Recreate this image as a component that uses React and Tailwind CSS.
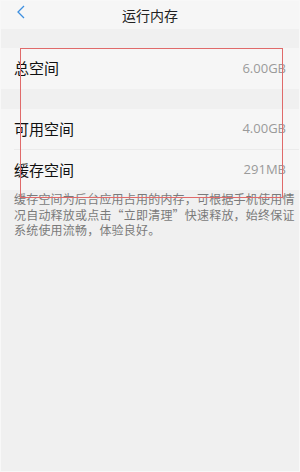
import React from "react";

export default function App() {
  const font = { fontFamily: '"Noto Sans CJK SC", "Noto Sans", sans-serif' };
  const num = { fontFamily: '"Open Sans", sans-serif' };
  return (
    <div className="relative w-[300px] h-[472px] bg-[#f0f0f0] border border-[#f8f8f8] overflow-hidden" style={font}>
      <div className="relative h-[28px] bg-[#f6f6f6] flex items-center justify-center">
        <svg className="absolute left-[14px] top-[4px]" width="12" height="14" viewBox="0 0 12 14">
          <path d="M9 1 L3 7 L9 13" fill="none" stroke="#3d8fe0" strokeWidth="1.3" />
        </svg>
        <span className="text-[14px] text-[#222] leading-none">运行内存</span>
      </div>
      <div className="h-[19px]" />
      <div className="h-[41px] bg-[#f6f6f6] flex items-center justify-between pl-[13px] pr-[13px]">
        <span className="text-[15px] text-[#111]">总空间</span>
        <span className="text-[13px] text-[#9a9a9a]" style={num}>6.00GB</span>
      </div>
      <div className="h-[20px]" />
      <div className="bg-[#f6f6f6]">
        <div className="h-[40px] flex items-center justify-between pl-[13px] pr-[13px]">
          <span className="text-[15px] text-[#111]">可用空间</span>
          <span className="text-[13px] text-[#9a9a9a]" style={num}>4.00GB</span>
        </div>
        <div className="ml-[13px] h-px bg-[#ebebeb]" />
        <div className="h-[40px] flex items-center justify-between pl-[13px] pr-[13px]">
          <span className="text-[15px] text-[#111]">缓存空间</span>
          <span className="text-[13px] text-[#9a9a9a]" style={num}>291MB</span>
        </div>
      </div>
      <p className="pl-[13px] pt-[1px] text-[12px] leading-[15.5px] tracking-[0.2px] text-[#7a7a7a] whitespace-nowrap">
        缓存空间为后台应用占用的内存，可根据手机使用情
        <br />
        况自动释放或点击“立即清理”快速释放，始终保证
        <br />
        系统使用流畅，体验良好。
      </p>
      <div className="absolute left-[19px] top-[47px] w-[263px] h-[150px] border border-[#e06a6a]" />
    </div>
  );
}
